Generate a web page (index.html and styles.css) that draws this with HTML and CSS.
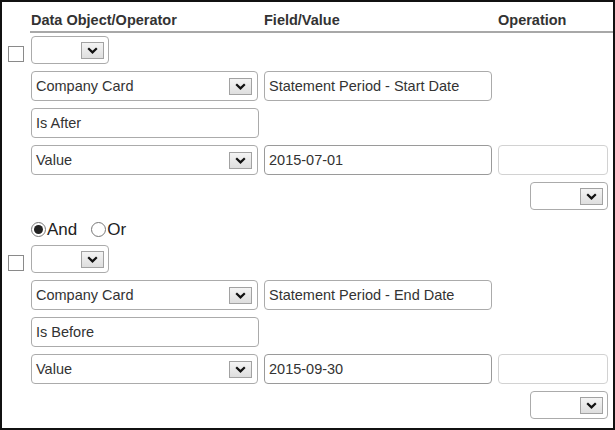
FILE: index.html
```html
<!DOCTYPE html>
<html>
<head>
<meta charset="utf-8">
<link rel="stylesheet" href="styles.css">
</head>
<body>
<div class="panel">
  <div class="head">
    <span class="hcol c1">Data Object/Operator</span>
    <span class="hcol c2">Field/Value</span>
    <span class="hcol c3">Operation</span>
  </div>

  <div class="group">
    <div class="row first">
      <span class="cb"></span>
      <div class="sel small"><span class="txt"></span><span class="btn"><svg width="11" height="7" viewBox="0 0 11 7"><path d="M1.2 1.2 L5.5 5.4 L9.8 1.2" fill="none" stroke="#111" stroke-width="2.2"/></svg></span></div>
    </div>
    <div class="row">
      <div class="sel wide"><span class="txt">Company Card</span><span class="btn"><svg width="11" height="7" viewBox="0 0 11 7"><path d="M1.2 1.2 L5.5 5.4 L9.8 1.2" fill="none" stroke="#111" stroke-width="2.2"/></svg></span></div>
      <div class="inp wide">Statement Period - Start Date</div>
    </div>
    <div class="row">
      <div class="inp wide">Is After</div>
    </div>
    <div class="row">
      <div class="sel wide"><span class="txt">Value</span><span class="btn"><svg width="11" height="7" viewBox="0 0 11 7"><path d="M1.2 1.2 L5.5 5.4 L9.8 1.2" fill="none" stroke="#111" stroke-width="2.2"/></svg></span></div>
      <div class="inp wide dark">2015-07-01</div>
      <div class="inp op"></div>
    </div>
    <div class="row end">
      <div class="sel small"><span class="txt"></span><span class="btn"><svg width="11" height="7" viewBox="0 0 11 7"><path d="M1.2 1.2 L5.5 5.4 L9.8 1.2" fill="none" stroke="#111" stroke-width="2.2"/></svg></span></div>
    </div>
  </div>

  <div class="logic">
    <span class="radio on"></span><span class="rlabel">And</span>
    <span class="radio"></span><span class="rlabel">Or</span>
  </div>

  <div class="group">
    <div class="row first">
      <span class="cb"></span>
      <div class="sel small"><span class="txt"></span><span class="btn"><svg width="11" height="7" viewBox="0 0 11 7"><path d="M1.2 1.2 L5.5 5.4 L9.8 1.2" fill="none" stroke="#111" stroke-width="2.2"/></svg></span></div>
    </div>
    <div class="row">
      <div class="sel wide"><span class="txt">Company Card</span><span class="btn"><svg width="11" height="7" viewBox="0 0 11 7"><path d="M1.2 1.2 L5.5 5.4 L9.8 1.2" fill="none" stroke="#111" stroke-width="2.2"/></svg></span></div>
      <div class="inp wide">Statement Period - End Date</div>
    </div>
    <div class="row">
      <div class="inp wide">Is Before</div>
    </div>
    <div class="row">
      <div class="sel wide"><span class="txt">Value</span><span class="btn"><svg width="11" height="7" viewBox="0 0 11 7"><path d="M1.2 1.2 L5.5 5.4 L9.8 1.2" fill="none" stroke="#111" stroke-width="2.2"/></svg></span></div>
      <div class="inp wide dark">2015-09-30</div>
      <div class="inp op"></div>
    </div>
    <div class="row end">
      <div class="sel small"><span class="txt"></span><span class="btn"><svg width="11" height="7" viewBox="0 0 11 7"><path d="M1.2 1.2 L5.5 5.4 L9.8 1.2" fill="none" stroke="#111" stroke-width="2.2"/></svg></span></div>
    </div>
  </div>
</div>
</body>
</html>
```

FILE: styles.css
```css
html, body {
  margin: 0;
  padding: 0;
  background: #fff;
}
.panel {
  box-sizing: border-box;
  width: 615px;
  height: 430px;
  border: 2px solid #111;
  font-family: "Liberation Sans", Arial, sans-serif;
  font-size: 14.5px;
  color: #333;
  overflow: hidden;
}
.head {
  display: flex;
  margin-left: 28px;
  padding-top: 10px;
  padding-bottom: 2px;
  border-bottom: 2px solid #a8a8a8;
  font-weight: bold;
  line-height: 17px;
}
.hcol {
  display: block;
  box-sizing: border-box;
  padding-left: 1px;
}
.hcol.c1 { width: 233px; }
.hcol.c2 { width: 234px; }
.group {
  display: flex;
  flex-direction: column;
  gap: 7px;
  margin-top: 3px;
}
.row {
  display: flex;
  gap: 6px;
  padding-left: 29px;
}
.row.first {
  padding-left: 6px;
  gap: 7px;
  align-items: flex-end;
}
.row.end {
  justify-content: flex-end;
  padding-right: 5px;
}
.cb {
  display: block;
  width: 14px;
  height: 14px;
  border: 1px solid #8a8a8a;
  background: #fff;
  margin-bottom: 2px;
}
.sel, .inp {
  box-sizing: border-box;
  height: 30px;
  border: 1px solid #ababab;
  border-radius: 4px;
  background: #fff;
  line-height: 28px;
  white-space: nowrap;
}
.sel {
  display: flex;
  align-items: center;
  justify-content: space-between;
  padding: 0 5px 0 4px;
}
.inp {
  padding-left: 4px;
}
.sel.small {
  width: 78px;
  height: 28px;
  padding-right: 4px;
}
.wide { width: 228px; }
.sel.wide { width: 227px; }
.inp.dark { border-color: #9a9a9a; }
.inp.op {
  width: 110px;
  border-color: #d2d2d2;
}
.btn {
  box-sizing: border-box;
  display: flex;
  align-items: center;
  justify-content: center;
  width: 23px;
  height: 17px;
  border: 1px solid #a2a2a2;
  background: linear-gradient(#f4f4f4, #dedede);
}
.logic {
  display: flex;
  align-items: center;
  margin: 11px 0 7px 29px;
  height: 17px;
  font-size: 17px;
  color: #222;
}
.radio {
  box-sizing: border-box;
  width: 15px;
  height: 15px;
  border: 1px solid #777;
  border-radius: 50%;
  background: #fff;
  display: flex;
  align-items: center;
  justify-content: center;
}
.radio.on::after {
  content: "";
  width: 9px;
  height: 9px;
  border-radius: 50%;
  background: #222;
}
.rlabel {
  margin-left: 1px;
  margin-right: 14px;
}
```
